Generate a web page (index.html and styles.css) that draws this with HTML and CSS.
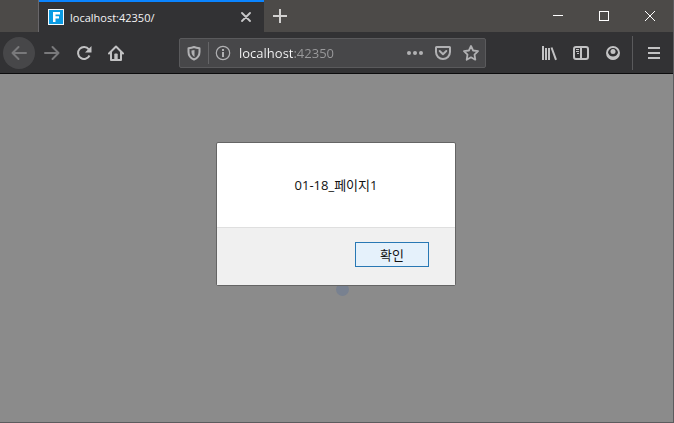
FILE: index.html
```
<!DOCTYPE html>
<html lang="ko">
<head>
<meta charset="utf-8">
<meta name="viewport" content="width=device-width, initial-scale=1">
<title>localhost:42350/</title>
<link rel="stylesheet" href="styles.css">
</head>
<body>
<div class="window">
  <header class="titlebar">
    <div class="tab">
      <svg class="favicon" viewBox="0 0 16 16" aria-hidden="true"><rect x=".5" y=".5" width="15" height="15" fill="#0a9be3" stroke="#f4fbff"/><path d="M5 3h7v2.500H7.500v1.700H11v2.300H7.500V13H5z" fill="#fff"/></svg>
      <span class="tab-title">localhost:42350/</span>
      <button class="tab-close" type="button" aria-label="Close tab"><svg width="10" height="10" viewBox="0 0 10 10"><path d="M1 1l8 8M9 1l-8 8" stroke="#c8c8c9" stroke-width="1.800" stroke-linecap="round"/></svg></button>
    </div>
    <button class="new-tab" type="button" aria-label="New tab"><svg width="14" height="14" viewBox="0 0 14 14"><path d="M7 0v14M0 7h14" stroke="#d2d1d0" stroke-width="2"/></svg></button>
    <div class="window-controls">
      <button class="window-button" type="button" aria-label="Minimize"><svg width="10" height="10" viewBox="0 0 10 10"><path d="M0 4.500h10" stroke="#fff"/></svg></button>
      <button class="window-button" type="button" aria-label="Maximize"><svg width="10" height="10" viewBox="0 0 10 10"><rect x=".5" y=".5" width="9" height="9" fill="none" stroke="#fff"/></svg></button>
      <button class="window-button" type="button" aria-label="Close"><svg width="10" height="10" viewBox="0 0 10 10"><path d="M0 0l10 10M10 0L0 10" stroke="#fff"/></svg></button>
    </div>
  </header>

  <nav class="toolbar" aria-label="Navigation">
    <button class="tool back" type="button" aria-label="Back"><svg viewBox="0 0 16 16"><path d="M15 8H1.500M7.500 2l-6 6 6 6" stroke-linecap="round" stroke-linejoin="round"/></svg></button>
    <button class="tool forward" type="button" aria-label="Forward"><svg viewBox="0 0 16 16"><path d="M1 8h13.500M8.500 2l6 6-6 6" stroke-linecap="round" stroke-linejoin="round"/></svg></button>
    <button class="tool" type="button" aria-label="Reload"><svg viewBox="0 0 16 16"><path d="M12.800 4.300A6 6 0 1 0 13.500 10.500"/><path class="solid" d="M15.500 1v6.500H9z"/></svg></button>
    <button class="tool" type="button" aria-label="Home"><svg viewBox="0 0 16 16"><path d="M1 8.500L8 1.500l7 7M3 7v8h10V7" stroke-linejoin="round" stroke-linecap="round"/><path class="solid" d="M6.300 15V9.500a1 1 0 0 1 1-1h1.400a1 1 0 0 1 1 1V15z"/></svg></button>

    <div class="address">
      <button class="address-button" type="button" aria-label="Tracking protection"><svg viewBox="0 0 16 16"><path d="M8 2c2 .8 3.500 1 5.500 1.200V7c0 3.500-2 6-5.500 7.500C4.500 13 2.500 10.500 2.500 7V3.200C4.500 3 6 2.800 8 2z" stroke-linejoin="round"/><path class="solid" d="M8.500 5v7c-2-1.200-3-3-3-5V5.600c1-.1 2-.3 3-.6z"/></svg></button>
      <span class="address-divider"></span>
      <button class="address-button" type="button" aria-label="Site information"><svg viewBox="0 0 16 16"><circle cx="8" cy="8" r="6.700" stroke-width="1.200"/><path d="M8 7v5M8 4v2"/></svg></button>
      <input class="url" type="text" value="localhost:42350" aria-label="Address" spellcheck="false">
      <button class="address-button action" type="button" aria-label="Page actions"><svg viewBox="0 0 16 16"><g class="solid"><circle cx="2" cy="8" r="2"/><circle cx="8" cy="8" r="2"/><circle cx="14" cy="8" r="2"/></g></svg></button>
      <button class="address-button action" type="button" aria-label="Save to Pocket"><svg viewBox="0 0 16 16"><path d="M1 2.500Q1 2 1.500 2h13q.5 0 .5.500V7A7 7 0 0 1 1 7z" stroke-linejoin="round"/><path d="M4.700 6L8 9.200 11.300 6" stroke-linecap="round" stroke-linejoin="round"/></svg></button>
      <button class="address-button action" type="button" aria-label="Bookmark"><svg viewBox="0 0 16 16"><path d="M8 1l2.100 4.500 4.900.7-3.500 3.500.8 5L8 12.300 3.700 14.700l.8-5L1 6.200l4.900-.7z" stroke-width="1.800" stroke-linejoin="round"/></svg></button>
    </div>

    <button class="tool" type="button" aria-label="Library"><svg viewBox="0 0 16 16"><path d="M2 1v14M5 3v12M8 3v12M10.500 2.500L15 14.800"/></svg></button>
    <button class="tool" type="button" aria-label="Sidebar"><svg viewBox="0 0 16 16"><rect x="1" y="2" width="14" height="12" rx="2"/><path d="M8 2v12"/><path d="M3 4.500h3M3 6.500h3M4 8.500h2" stroke-width="1"/></svg></button>
    <button class="tool" type="button" aria-label="Account"><svg viewBox="0 0 16 16"><circle cx="8" cy="8" r="6"/><circle class="solid" cx="8" cy="6.500" r="2.500"/><path class="solid" d="M2 8.500h1.500c.5 2 2.300 3 4.500 3s4-1 4.500-3H14c0 4-2.500 6-6 6s-6-2-6-6z"/></svg></button>
    <span class="tool-divider"></span>
    <button class="tool menu" type="button" aria-label="Menu"><svg viewBox="0 0 16 16"><path d="M2 3h12M2 8h12M2 13h12"/></svg></button>
  </nav>

  <main class="page">
    <div class="dialog" role="alertdialog" aria-modal="true" aria-describedby="message">
      <p class="message" id="message">01-18_페이지1</p>
      <div class="dialog-actions">
        <button class="confirm" type="button">확인</button>
      </div>
      <span class="loading-dot"></span>
    </div>
  </main>
</div>
</body>
</html>
```
FILE: styles.css
```
* {
  box-sizing: border-box;
}

body {
  margin: 0;
  font-family: "Open Sans", "Noto Sans CJK KR", sans-serif;
  font-size: 13px;
}

button {
  display: flex;
  align-items: center;
  justify-content: center;
  flex: none;
  padding: 0;
  border: 0;
  background: none;
  font: inherit;
}

svg {
  display: block;
  fill: none;
}

.window {
  display: flex;
  flex-direction: column;
  min-height: 100vh;
  border: solid #5c5b5e;
  border-width: 0 1px 1px 0;
  background: #8b8b8b;
}

.titlebar {
  display: flex;
  height: 32px;
  padding-left: 38px;
  background: #4c4a48;
}

.tab {
  display: flex;
  align-items: center;
  flex: 0 1 226px;
  padding: 2px 10px 0 9px;
  border-left: 1px solid #69676a;
  background: linear-gradient(#0a84ff 2px, #323234 2px);
  color: #f4f4f5;
}

.favicon {
  flex: none;
  width: 16px;
  height: 16px;
}

.tab-title {
  flex: 1;
  margin-left: 6px;
  font-size: 11px;
  white-space: nowrap;
}

.tab-close {
  width: 16px;
  height: 16px;
}

.new-tab {
  width: 32px;
}

.window-controls {
  display: flex;
  margin-left: auto;
}

.window-button {
  width: 46px;
}

.toolbar {
  display: flex;
  align-items: center;
  height: 42px;
  padding: 0 3px;
  border-bottom: 1px solid #0c0c0d;
  background: #323234;
}

.tool {
  width: 32px;
  height: 32px;
  border-radius: 2px;
}

.tool svg,
.address-button svg {
  width: 16px;
  height: 16px;
  stroke: #c2c2c3;
  stroke-width: 2;
}

.toolbar .solid {
  fill: #c2c2c3;
  stroke: none;
}

.back {
  margin-right: 1px;
  border-radius: 50%;
  background: #474749;
}

.back svg,
.forward svg {
  stroke: #79797b;
}

.address {
  display: flex;
  align-items: center;
  flex: 1;
  min-width: 0;
  height: 30px;
  margin: 0 47px;
  border: 1px solid #5a5a5c;
  border-radius: 2px;
  background: #474749;
}

.address-button {
  width: 28px;
  height: 28px;
}

.address-button svg {
  stroke: #b1b1b3;
}

.address .solid {
  fill: #b1b1b3;
}

.address-divider {
  flex: none;
  width: 1px;
  height: 22px;
  background: #656567;
}

.url {
  flex: 1;
  min-width: 0;
  padding: 0 0 0 2px;
  border: 0;
  outline: 0;
  background: linear-gradient(90deg, #f9f9fa 57px, #9a9a9c 57px);
  background-clip: text;
  color: transparent;
  caret-color: #f9f9fa;
  font: inherit;
}

.tool-divider {
  width: 1px;
  height: 34px;
  margin: 0 5px 0 3px;
  background: #5a5a5c;
}

.page {
  position: relative;
  z-index: 0;
  display: flex;
  flex: 1;
  align-items: flex-start;
  justify-content: center;
  padding: 68px 1px 0 0;
}

.dialog {
  position: relative;
  width: 240px;
  border: 1px solid #656565;
  border-radius: 2px;
  background: #fff;
  color: #111;
}

.message {
  margin: 0;
  padding: 34px 16px;
  line-height: 16px;
  text-align: center;
}

.dialog-actions {
  display: flex;
  justify-content: flex-end;
  padding: 14px 26px 18px;
  border-top: 1px solid #dfdfdf;
  background: #f0f0f0;
}

.confirm {
  width: 74px;
  height: 25px;
  border: 1px solid #2878b4;
  background: #e5f1fb;
  color: #111;
}

.loading-dot {
  position: absolute;
  z-index: -1;
  top: 140px;
  left: 119px;
  width: 13px;
  height: 13px;
  border-radius: 50%;
  background: #788190;
}
```
